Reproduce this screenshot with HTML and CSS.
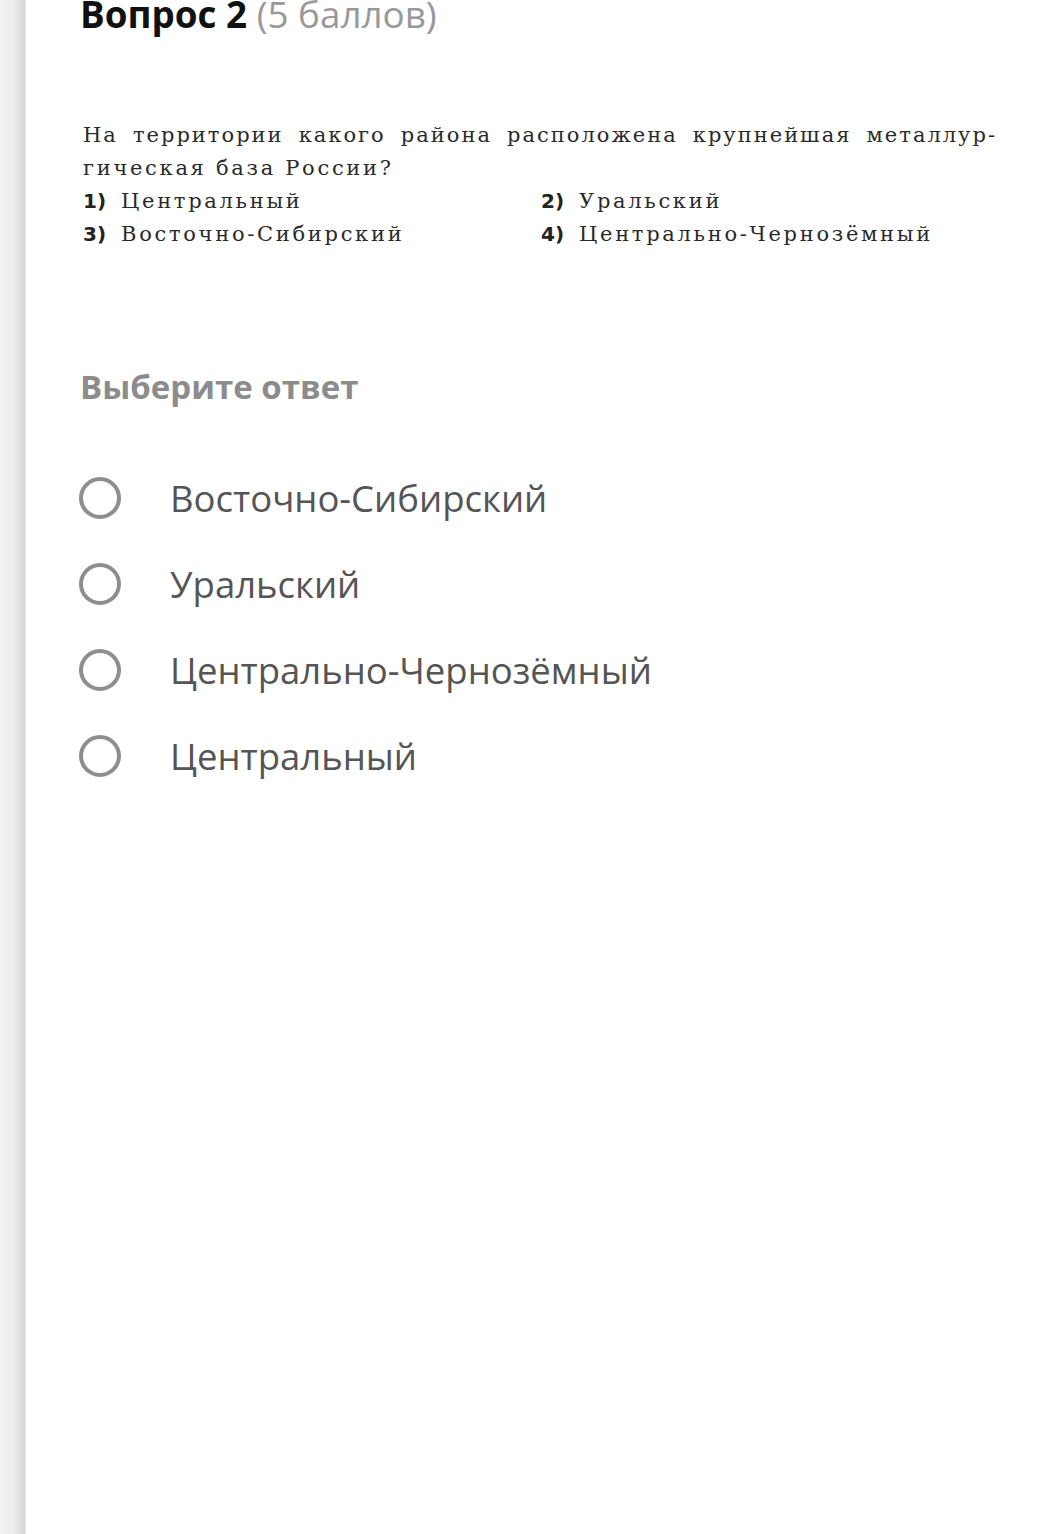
FILE: index.html
```html
<!DOCTYPE html>
<html lang="ru">
<head>
    <meta charset="UTF-8">
    <meta name="viewport" content="width=device-width, initial-scale=1.0">
    <title>Вопрос 2</title>
    <link rel="stylesheet" href="styles.css">
</head>
<body>
    <div class="container">
        <h1 class="question-title">Вопрос 2 <span class="points">(5 баллов)</span></h1>

        <!-- question text (scan from the textbook) -->
        <div class="question-text">
            <p class="line line-full">На территории какого района расположена крупнейшая металлур-</p>
            <p class="line">гическая база России?</p>
            <div class="choices">
                <div class="choice"><b>1)</b>Центральный</div>
                <div class="choice"><b>2)</b>Уральский</div>
                <div class="choice"><b>3)</b>Восточно-Сибирский</div>
                <div class="choice"><b>4)</b>Центрально-Чернозёмный</div>
            </div>
        </div>

        <h2 class="answer-title">Выберите ответ</h2>

        <form class="answers">
            <label class="answer"><input type="radio" name="q2" value="1"><span class="radio"></span>Восточно-Сибирский</label>
            <label class="answer"><input type="radio" name="q2" value="2"><span class="radio"></span>Уральский</label>
            <label class="answer"><input type="radio" name="q2" value="3"><span class="radio"></span>Центрально-Чернозёмный</label>
            <label class="answer"><input type="radio" name="q2" value="4"><span class="radio"></span>Центральный</label>
        </form>
    </div>
</body>
</html>
```

FILE: styles.css
```css
html, body {
    margin: 0;
    padding: 0;
    height: 100%;
}
body {
    background: linear-gradient(to right, #f3f3f3 0, #ececec 14px, #d6d6d6 25px, #ffffff 26px);
    font-family: "Open Sans", "Noto Sans", sans-serif;
    color: #555;
}
.container {
    padding: 0 40px 0 79px;
}
.question-title {
    margin: -6px 0 0;
    padding-left: 1px;
    font-size: 36.8px;
    line-height: 40px;
    font-weight: 700;
    color: #111;
}
.points {
    font-weight: 400;
    color: #999;
}
.question-text {
    margin-top: 85px;
    padding-left: 4px;
    width: 914px;
    font-family: "DejaVu Serif", "Liberation Serif", serif;
    font-size: 21px;
    line-height: 33px;
    color: #2a2a2a;
    letter-spacing: 2.7px;
}
.line {
    margin: 0;
}
.line-full {
    text-align: justify;
    text-align-last: justify;
    letter-spacing: 2px;
}
.choices {
    display: grid;
    grid-template-columns: 458px 1fr;
}
.choice b {
    display: inline-block;
    width: 38px;
    font-family: "DejaVu Sans", "Liberation Sans", sans-serif;
    font-size: 20px;
    font-weight: 700;
    letter-spacing: 0;
    color: #222;
}
.answer-title {
    margin: 116px 0 0;
    padding-left: 1px;
    font-size: 33px;
    line-height: 40px;
    font-weight: 700;
    color: #8c8c8c;
}
.answers {
    margin-top: 48px;
}
.answer {
    display: flex;
    align-items: center;
    height: 86px;
    font-size: 36.5px;
    color: #555;
}
.answer input {
    display: none;
}
.radio {
    box-sizing: border-box;
    width: 42px;
    height: 42px;
    margin-right: 49px;
    border: 4px solid #8e8e8e;
    border-radius: 50%;
    flex: none;
}
```
